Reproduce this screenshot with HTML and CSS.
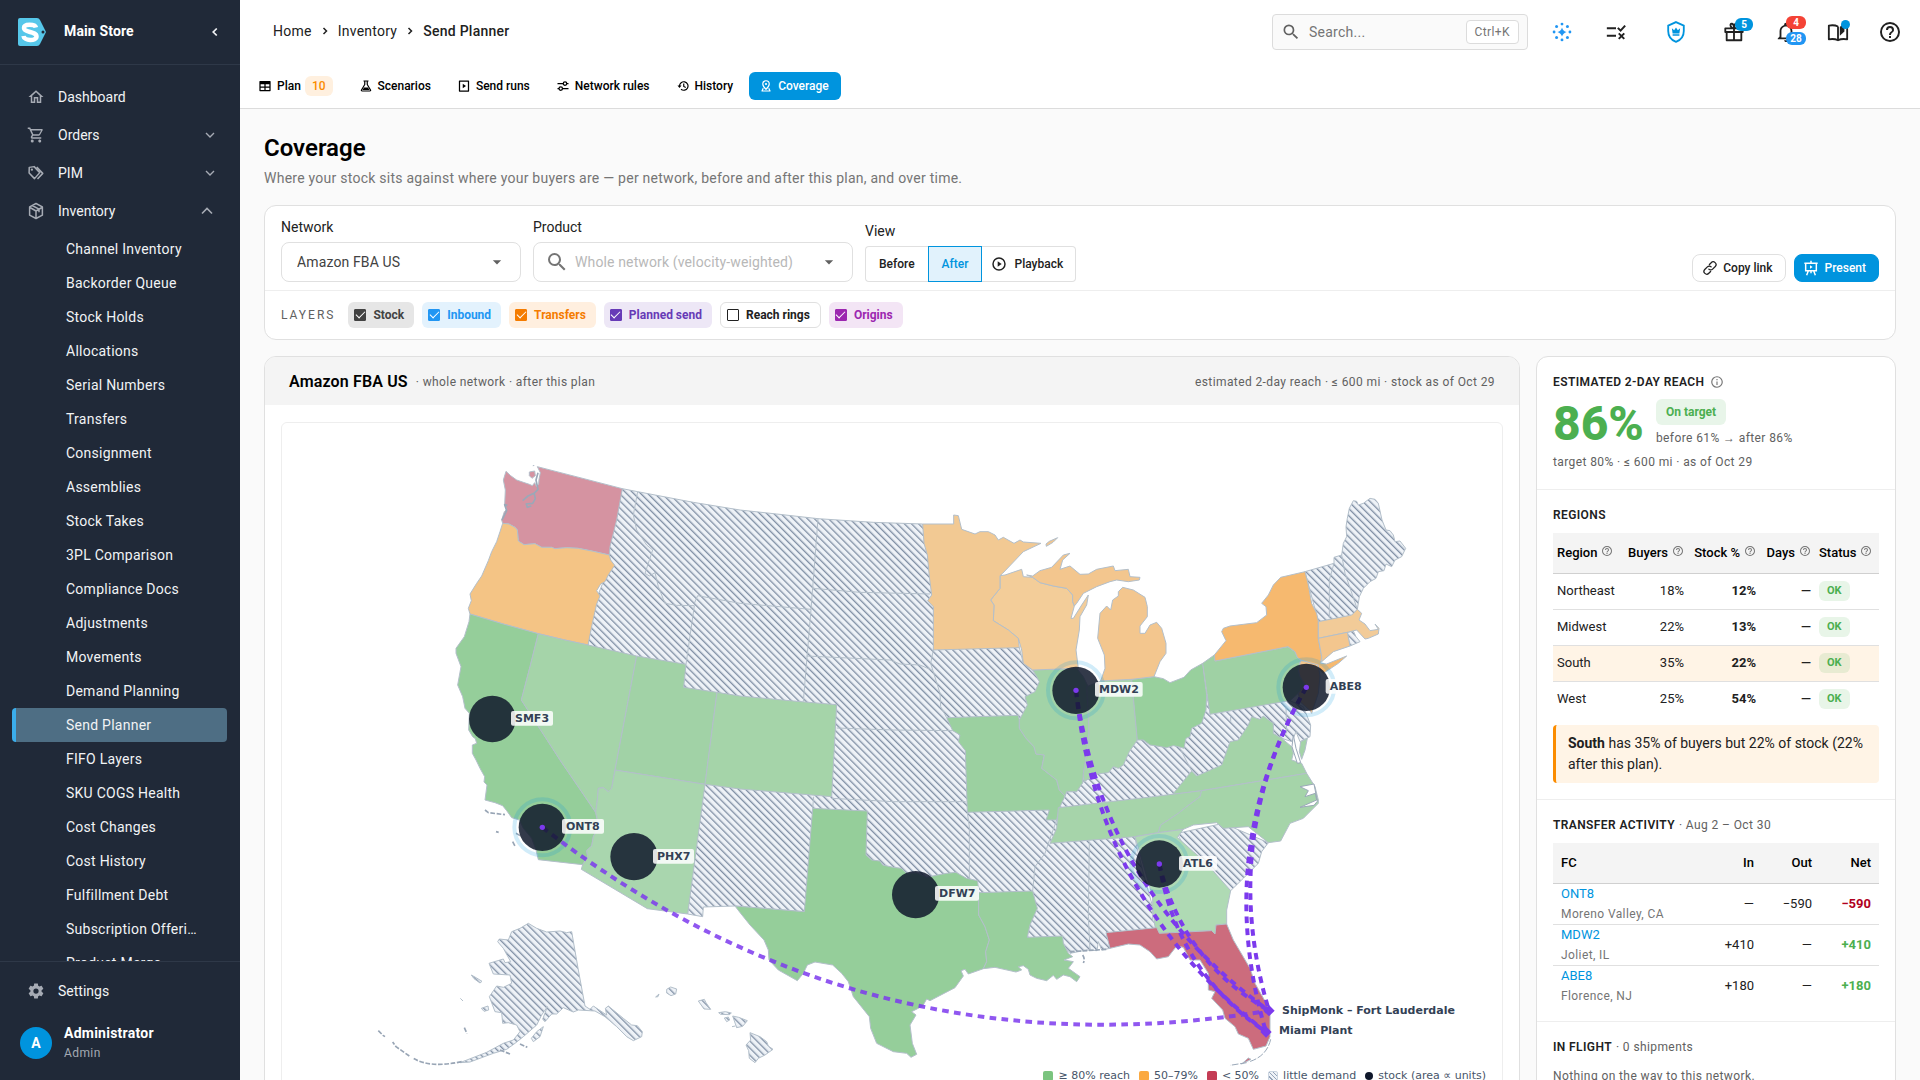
FILE: index.html
```html
<!DOCTYPE html>
<html lang="en">
<head>
<meta charset="utf-8">
<meta name="viewport" content="width=device-width, initial-scale=1">
<title>Coverage · Send Planner</title>
<link rel="stylesheet" href="styles.css">
</head>
<body>
<svg class="defs" aria-hidden="true">
  <symbol id="i-magnify" viewBox="0 0 24 24"><path fill="currentColor" d="M9.5,3A6.5,6.5 0 0,1 16,9.5C16,11.11 15.41,12.59 14.44,13.73L14.71,14H15.5L20.5,19L19,20.5L14,15.5V14.71L13.73,14.44C12.59,15.41 11.11,16 9.5,16A6.5,6.5 0 0,1 3,9.5A6.5,6.5 0 0,1 9.5,3M9.5,5C7,5 5,7 5,9.5C5,12 7,14 9.5,14C12,14 14,12 14,9.5C14,7 12,5 9.5,5Z"/></symbol>
  <symbol id="i-home" viewBox="0 0 24 24"><path fill="currentColor" d="M12 5.69L17 10.19V18H15V12H9V18H7V10.19L12 5.69M12 3L2 12H5V20H11V14H13V20H19V12H22L12 3Z"/></symbol>
  <symbol id="i-cart" viewBox="0 0 24 24"><path fill="currentColor" d="M17,18A2,2 0 0,1 19,20A2,2 0 0,1 17,22C15.89,22 15,21.1 15,20C15,18.89 15.89,18 17,18M1,2H4.27L5.21,4H20A1,1 0 0,1 21,5C21,5.17 20.95,5.34 20.88,5.5L17.3,11.97C16.96,12.58 16.3,13 15.55,13H8.1L7.2,14.63L7.17,14.75A0.25,0.25 0 0,0 7.42,15H19V17H7C5.89,17 5,16.1 5,15C5,14.65 5.09,14.32 5.24,14.04L6.6,11.59L3,4H1V2M7,18A2,2 0 0,1 9,20A2,2 0 0,1 7,22C5.89,22 5,21.1 5,20C5,18.89 5.89,18 7,18M16,11L18.78,6H6.14L8.5,11H16Z"/></symbol>
  <symbol id="i-tags" viewBox="0 0 24 24"><path fill="none" stroke="currentColor" stroke-width="2" stroke-linejoin="round" d="M3 4.500 9.500 3.500 17 11.500 10 19.500 2.800 12zM13 4l8 8.500-7 7.500"/><circle cx="6.500" cy="7.500" r="1.500" fill="currentColor"/></symbol>
  <symbol id="i-box" viewBox="0 0 24 24"><path fill="none" stroke="currentColor" stroke-width="2" stroke-linejoin="round" d="M12 2 20.500 6.500v11L12 22 3.500 17.500v-11zM3.500 7 12 12l8.500-5M12 12v9.500M7.500 5 16 9.500v4"/></symbol>
  <symbol id="i-cog" viewBox="0 0 24 24"><path fill="currentColor" d="M12,15.5A3.5,3.5 0 0,1 8.500,12A3.5,3.5 0 0,1 12,8.500A3.5,3.5 0 0,1 15.500,12A3.5,3.5 0 0,1 12,15.500M19.430,12.970C19.470,12.650 19.500,12.330 19.500,12C19.500,11.670 19.470,11.340 19.430,11L21.540,9.370C21.730,9.220 21.780,8.950 21.660,8.730L19.660,5.270C19.540,5.050 19.270,4.960 19.050,5.050L16.560,6.050C16.040,5.660 15.500,5.320 14.870,5.070L14.500,2.420C14.460,2.180 14.250,2 14,2H10C9.750,2 9.540,2.180 9.500,2.420L9.130,5.070C8.500,5.320 7.960,5.660 7.440,6.050L4.950,5.050C4.730,4.960 4.460,5.050 4.340,5.270L2.340,8.730C2.210,8.950 2.270,9.220 2.460,9.370L4.570,11C4.530,11.340 4.500,11.670 4.500,12C4.500,12.330 4.530,12.650 4.570,12.970L2.460,14.630C2.270,14.780 2.210,15.050 2.340,15.270L4.340,18.730C4.460,18.950 4.730,19.030 4.950,18.950L7.440,17.940C7.960,18.340 8.500,18.680 9.130,18.930L9.500,21.580C9.540,21.820 9.750,22 10,22H14C14.250,22 14.460,21.820 14.500,21.580L14.870,18.930C15.500,18.670 16.040,18.340 16.560,17.940L19.050,18.950C19.270,19.030 19.540,18.950 19.660,18.730L21.660,15.270C21.780,15.050 21.730,14.780 21.540,14.630L19.430,12.970Z"/></symbol>
  <symbol id="i-down" viewBox="0 0 24 24"><path fill="none" stroke="currentColor" stroke-width="2" d="M6 9l6 6 6-6"/></symbol>
  <symbol id="i-up" viewBox="0 0 24 24"><path fill="none" stroke="currentColor" stroke-width="2" d="M6 15l6-6 6 6"/></symbol>
  <symbol id="i-left" viewBox="0 0 24 24"><path fill="none" stroke="currentColor" stroke-width="3" d="M15 6l-6 6 6 6"/></symbol>
  <symbol id="i-right" viewBox="0 0 24 24"><path fill="none" stroke="currentColor" stroke-width="3" d="M9 6l6 6-6 6"/></symbol>
  <symbol id="i-caret" viewBox="0 0 24 24"><path fill="currentColor" d="M7 10l5 5 5-5z"/></symbol>
  <symbol id="i-help" viewBox="0 0 24 24"><path fill="currentColor" d="M11,18H13V16H11V18M12,2A10,10 0 0,0 2,12A10,10 0 0,0 12,22A10,10 0 0,0 22,12A10,10 0 0,0 12,2M12,20C7.59,20 4,16.41 4,12C4,7.59 7.59,4 12,4C16.41,4 20,7.59 20,12C20,16.41 16.41,20 12,20M12,6A4,4 0 0,0 8,10H10A2,2 0 0,1 12,8A2,2 0 0,1 14,10C14,12 11,11.75 11,15H13C13,12.75 16,12.5 16,10A4,4 0 0,0 12,6Z"/></symbol>
  <symbol id="i-info" viewBox="0 0 24 24"><path fill="none" stroke="currentColor" stroke-width="2" d="M12 3a9 9 0 1 0 0 18 9 9 0 0 0 0-18zM12 11v6M12 7v2"/></symbol>
  <symbol id="i-table" viewBox="0 0 24 24"><path fill="none" stroke="currentColor" stroke-width="2.500" stroke-linejoin="round" d="M2 3h20v18H2zM2 14h20M12 8v13"/><path fill="currentColor" d="M2 3h20v5.500H2z"/></symbol>
  <symbol id="i-flask" viewBox="0 0 24 24"><path fill="none" stroke="currentColor" stroke-width="2.400" stroke-linejoin="round" d="M7 2h10M9.500 2v7L3 20q-1 2 1.500 2h15q2.500 0 1.500-2L14.500 9V2"/><path fill="currentColor" d="M8 15h8l3 5H5z"/></symbol>
  <symbol id="i-run" viewBox="0 0 24 24"><path fill="none" stroke="currentColor" stroke-width="2.500" stroke-linejoin="round" d="M3 2h18v20H3z"/><path fill="currentColor" d="M9.500 7.500l6.500 4.500-6.500 4.500z"/></symbol>
  <symbol id="i-rules" viewBox="0 0 24 24"><path fill="none" stroke="currentColor" stroke-width="2.500" d="M1 7h12M19 7h4M16 3.500a3.500 3.500 0 1 1 0 7 3.500 3.500 0 0 1 0-7M23 17H11M1 17h3M7.500 13.500a3.500 3.500 0 1 1 0 7 3.500 3.500 0 0 1 0-7"/></symbol>
  <symbol id="i-history" viewBox="0 0 24 24"><path fill="none" stroke="currentColor" stroke-width="2.400" d="M5 12a8.500 8.500 0 1 1 3 6.500M13.500 7v6l4 2"/><path fill="currentColor" d="M1 11h8l-4 5z"/></symbol>
  <symbol id="i-pin" viewBox="0 0 24 24"><path fill="none" stroke="currentColor" stroke-width="2.400" stroke-linejoin="round" d="M12 1.500a6.500 6.500 0 0 1 6.500 6.500c0 4.500-6.500 10.500-6.500 10.500S5.500 12.500 5.500 8A6.500 6.500 0 0 1 12 1.500zM6.500 16.500 4 22h16l-2.500-5.500"/><circle cx="12" cy="8" r="2.200" fill="currentColor"/></symbol>
  <symbol id="i-play" viewBox="0 0 24 24"><path fill="none" stroke="currentColor" stroke-width="2.200" d="M12 3a9 9 0 1 0 0 18 9 9 0 0 0 0-18z"/><path fill="currentColor" d="M10 8l6 4-6 4z"/></symbol>
  <symbol id="i-link" viewBox="0 0 24 24"><path fill="none" stroke="currentColor" stroke-width="2.200" stroke-linecap="round" d="M11 6l3-3a4.500 4.500 0 0 1 7 6.500l-4.500 4.500a4.500 4.500 0 0 1-6.500 0M13 18l-3 3a4.500 4.500 0 0 1-7-6.500L7.500 10a4.500 4.500 0 0 1 6.500 0"/></symbol>
  <symbol id="i-present" viewBox="0 0 24 24"><path fill="none" stroke="currentColor" stroke-width="2.200" d="M2 5h20M4 5v11h16V5M12 1v4M8 16l-2.500 7M16 16l2.500 7M12 16v4"/><path fill="currentColor" d="M10.500 8l4 2.500-4 2.500z"/></symbol>
  <symbol id="i-spark" viewBox="0 0 24 24"><path fill="currentColor" d="M12 6.500q1.200 4.300 5.500 5.500-4.300 1.200-5.500 5.500-1.200-4.300-5.500-5.500 4.300-1.200 5.500-5.500z"/><g fill="currentColor"><circle cx="12" cy="2.500" r="1.700"/><circle cx="12" cy="21.500" r="1.700"/><circle cx="2.500" cy="12" r="1.700"/><circle cx="21.500" cy="12" r="1.700"/><circle cx="5.500" cy="5.500" r="1.800"/><circle cx="18.500" cy="5.500" r="1.800"/><circle cx="5.500" cy="18.500" r="1.800"/><circle cx="18.500" cy="18.500" r="1.800"/></g></symbol>
  <symbol id="i-checks" viewBox="0 0 24 24"><path fill="none" stroke="currentColor" stroke-width="2.200" d="M2 8h10M2 16h10M14 7.500l3 3L22 5M15 13.500l6 6M21 13.500l-6 6"/></symbol>
  <symbol id="i-shield" viewBox="0 0 24 24"><path fill="none" stroke="currentColor" stroke-width="2" d="M12 1.200l8.500 3.800v6c0 5.500-3.500 10-8.500 11.800-5-1.800-8.500-6.300-8.500-11.800V5z"/><path fill="currentColor" d="M7.500 8l2.500 2 2-3 2 3 2.500-2-.8 5.500H8.300zM8.300 14.500h7.400v1.500H8.300z"/></symbol>
  <symbol id="i-gift" viewBox="0 0 24 24"><path fill="none" stroke="currentColor" stroke-width="2" stroke-linejoin="round" d="M2.500 8h19v4h-19zM4 12v9h16v-9M12 8v13M12 8C8 8 7 3 9.500 3S12 8 12 8s0-5 2.500-5S16 8 12 8"/></symbol>
  <symbol id="i-bell" viewBox="0 0 24 24"><path fill="currentColor" d="M10 21H14C14 22.1 13.1 23 12 23S10 22.1 10 21M21 19V20H3V19L5 17V11C5 7.900 7.030 5.170 10 4.290V4C10 2.900 10.900 2 12 2S14 2.900 14 4V4.290C16.970 5.170 19 7.900 19 11V17L21 19M17 11C17 8.240 14.760 6 12 6S7 8.240 7 11V18H17V11Z"/></symbol>
  <symbol id="i-book" viewBox="0 0 24 24"><path fill="none" stroke="currentColor" stroke-width="2" stroke-linejoin="round" d="M12 6q-4-2-10-1v15q6-1 10 1 4-2 10-1V6M12 6v15"/><path fill="currentColor" d="M14 6.500l5-4.500v9.500l-5 4.500z"/></symbol>
  <symbol id="i-logo" viewBox="0 0 28 28"><path fill="#56c7ea" d="M2 0h17q2 0 3 2l6 12-6 12q-1 2-3 2H2q-2 0-2-2V2q0-2 2-2z"/><circle cx="25" cy="14" r="1.500" fill="#202938"/><path fill="none" stroke="#fff" stroke-width="4.500" d="M18 9.500C17 6 6 5.500 6 10c0 5 12.500 3 12.500 8.500 0 5-12.500 4.500-13-.5"/></symbol>
</svg>

<div class="app">
<aside class="sidebar">
  <div class="brand">
    <svg class="logo"><use href="#i-logo"/></svg>
    <strong>Main Store</strong>
    <button class="collapse" aria-label="Collapse menu"><svg class="ic14"><use href="#i-left"/></svg></button>
  </div>
  <nav class="menu" aria-label="Main">
    <a class="item" href="#"><svg class="ic18"><use href="#i-home"/></svg><span>Dashboard</span></a>
    <a class="item" href="#"><svg class="ic18"><use href="#i-cart"/></svg><span>Orders</span><svg class="ic16 arrow"><use href="#i-down"/></svg></a>
    <a class="item" href="#"><svg class="ic18"><use href="#i-tags"/></svg><span>PIM</span><svg class="ic16 arrow"><use href="#i-down"/></svg></a>
    <a class="item open" href="#"><svg class="ic18"><use href="#i-box"/></svg><span>Inventory</span><svg class="ic20 arrow"><use href="#i-up"/></svg></a>
    <div class="submenu">
      <a href="#">Channel Inventory</a><a href="#">Backorder Queue</a><a href="#">Stock Holds</a><a href="#">Allocations</a><a href="#">Serial Numbers</a><a href="#">Transfers</a><a href="#">Consignment</a><a href="#">Assemblies</a><a href="#">Stock Takes</a><a href="#">3PL Comparison</a><a href="#">Compliance Docs</a><a href="#">Adjustments</a><a href="#">Movements</a><a href="#">Demand Planning</a><a href="#" class="active" aria-current="page">Send Planner</a><a href="#">FIFO Layers</a><a href="#">SKU COGS Health</a><a href="#">Cost Changes</a><a href="#">Cost History</a><a href="#">Fulfillment Debt</a><a href="#">Subscription Offerings</a><a href="#">Product Merge</a>
    </div>
  </nav>
  <div class="side-foot">
    <a class="item" href="#"><svg class="ic18"><use href="#i-cog"/></svg><span>Settings</span></a>
    <div class="user"><span class="avatar">A</span><div><strong>Administrator</strong><small>Admin</small></div></div>
  </div>
</aside>

<div class="page">
  <header class="topbar">
    <nav class="crumbs" aria-label="Breadcrumb"><a href="#">Home</a><svg class="ic12"><use href="#i-right"/></svg><a href="#">Inventory</a><svg class="ic12"><use href="#i-right"/></svg><b>Send Planner</b></nav>
    <label class="search"><svg class="ic20"><use href="#i-magnify"/></svg><input type="text" placeholder="Search..." aria-label="Search"><kbd>Ctrl+K</kbd></label>
    <div class="tools">
      <button class="blue" aria-label="Assistant"><svg class="ic20"><use href="#i-spark"/></svg></button>
      <button class="tasks" aria-label="Tasks"><svg class="ic22"><use href="#i-checks"/></svg></button>
      <button class="azure" aria-label="Security"><svg class="ic22"><use href="#i-shield"/></svg></button>
      <button aria-label="What's new"><svg class="ic22"><use href="#i-gift"/></svg><span class="badge b-gift">5</span></button>
      <button aria-label="Notifications"><svg class="ic22"><use href="#i-bell"/></svg><span class="badge b-red">4</span><span class="badge b-blue">28</span></button>
      <button aria-label="Guide"><svg class="ic22"><use href="#i-book"/></svg><span class="dot"></span></button>
      <button aria-label="Help"><svg class="ic24"><use href="#i-help"/></svg></button>
    </div>
  </header>
  <nav class="tabs" aria-label="Send planner">
    <a href="#"><svg class="ic12"><use href="#i-table"/></svg>Plan<span class="count">10</span></a>
    <a href="#"><svg class="ic12"><use href="#i-flask"/></svg>Scenarios</a>
    <a href="#"><svg class="ic12"><use href="#i-run"/></svg>Send runs</a>
    <a href="#"><svg class="ic12"><use href="#i-rules"/></svg>Network rules</a>
    <a href="#"><svg class="ic12"><use href="#i-history"/></svg>History</a>
    <a href="#" class="active"><svg class="ic12"><use href="#i-pin"/></svg>Coverage</a>
  </nav>

  <main class="content">
    <h1>Coverage</h1>
    <p class="lead">Where your stock sits against where your buyers are — per network, before and after this plan, and over time.</p>

    <section class="card filters">
      <div class="filter-row">
        <div class="field network">
          <label for="network">Network</label>
          <div class="control"><select id="network"><option>Amazon FBA US</option></select><svg class="ic20 caret"><use href="#i-caret"/></svg></div>
        </div>
        <div class="field product">
          <label for="product">Product</label>
          <div class="control"><svg class="ic24 lens"><use href="#i-magnify"/></svg><input id="product" type="text" placeholder="Whole network (velocity-weighted)"><svg class="ic20 caret"><use href="#i-caret"/></svg></div>
        </div>
        <div class="field">
          <span class="view-label" id="view">View</span>
          <div class="segments" role="group" aria-labelledby="view">
            <button>Before</button><button class="on">After</button><button><svg class="ic16"><use href="#i-play"/></svg>Playback</button>
          </div>
        </div>
        <div class="actions">
          <button class="btn"><svg class="ic14"><use href="#i-link"/></svg>Copy link</button>
          <button class="btn primary"><svg class="ic16"><use href="#i-present"/></svg>Present</button>
        </div>
      </div>
      <div class="layers">
        <span class="layers-title">LAYERS</span>
        <label class="chip stock"><input type="checkbox" checked>Stock</label>
        <label class="chip inbound"><input type="checkbox" checked>Inbound</label>
        <label class="chip transfers"><input type="checkbox" checked>Transfers</label>
        <label class="chip planned"><input type="checkbox" checked>Planned send</label>
        <label class="chip rings"><input type="checkbox">Reach rings</label>
        <label class="chip origins"><input type="checkbox" checked>Origins</label>
      </div>
    </section>

    <div class="columns">
      <section class="card map-card">
        <header class="map-head"><h2>Amazon FBA US</h2><span>· whole network · after this plan</span><span class="map-note">estimated 2-day reach · ≤ 600 mi · stock as of Oct 29</span></header>
        <div class="map-body"><div class="map-box">
          <svg class="map" viewBox="-234 -51 3660 1932" role="img" aria-label="Coverage map of the United States">
            <defs><pattern id="hatch" width="15" height="15" patternUnits="userSpaceOnUse" patternTransform="rotate(-45)"><rect width="15" height="15" fill="#eef2f7"/><rect width="4" height="15" fill="#8190a5"/></pattern></defs>
            <g class="state" fill="url(#hatch)">
              <path d="M787 146L833 155 1000 187 1140 210 1250 222 1374 236 1540 247 1688 252 1800 400 1800 600 1978 623 1990 670 2018 690 2100 720 2050 800 1980 900 2000 1000 2100 1130 2200 1180 2325 1190 2330 1220 2350 1300 2378 1400 2378 1440 2390 1463 2300 1490 2250 1500 2250 1525 2225 1530 2215 1505 2211 1532 2180 1530 2130 1540 2100 1510 1980 1500 1900 1400 1700 1380 1400 1350 1333 1415 1125 1398 1030 1401 1028 1430 983 1422 1000 1100 1000 900 900 700 684 615 700 500 740 400 750 300z"/>
              <path d="M2090 1105L2115 1068 2120 1055 2150 1055 2168 1028 2160 990 2300 900 2460 880 2540 765 2550 810 2790 782 2830 800 2852 855 2850 890 2820 905 2808 875 2796 905 2765 895 2740 930 2600 1000 2438 1063 2380 1072z"/>
              <path d="M2452 1180L2590 1150 2725 1208 2705 1235 2695 1270 2650 1315 2612 1352 2520 1320z"/>
              <path d="M2835 395L2922 370 2922 352 2945 345 2950 310 2960 290 2958 260 2962 235 2968 205 2980 182 2990 184 2995 195 3010 190 3030 175 3045 178 3055 190 3066 240 3078 270 3090 272 3100 285 3105 305 3120 303 3137 325 3125 350 3105 360 3095 380 3078 372 3072 392 3055 395 3048 415 3030 425 3010 445 2998 470 2992 508 2975 530 2875 545z"/>
              <path d="M2962 577L2980 573 2988 590 3000 605 2970 618z"/>
              <path d="M505 1450L530 1465 560 1476 600 1473 620 1478 635 1475 655 1590 675 1698 690 1708 700 1698 740 1725 736 1705 745 1698 790 1735 815 1755 832 1757 847 1775 845 1790 820 1802 800 1790 770 1760 735 1730 705 1713 655 1710 640 1716 610 1703 590 1722 575 1722 555 1745 548 1738 562 1700 545 1725 530 1755 490 1790 465 1810 440 1828 400 1840 330 1866 300 1868 380 1837 430 1810 460 1800 480 1775 470 1755 445 1748 428 1750 425 1718 405 1715 388 1670 410 1638 430 1642 455 1630 450 1605 400 1602 387 1570 430 1557 435 1568 452 1565 430 1525 413 1505 418 1497 445 1500 455 1475 480 1465z"/>
              <path d="M550 1760L540 1790 520 1805 514 1795 530 1775zM364 1705L384 1698 386 1710 372 1714zM334 1605L350 1614 366 1624 360 1629 342 1616zM301 1675l8 8"/>
              <path d="M920 1648l12-7 18 6-3 15-14 5-13-8zM887 1671l10-9-3 8zM1015 1683l18-5 5 10 14 20-20-1zM1076 1718l20-3 18 4-6 5-26-1zM1093 1734l12-3 4 9-9 5zM1118 1728l18 4 26 10-14 17-18 4zM1116 1760l10-2"/>
              <path d="M1170 1778L1200 1790 1220 1805 1225 1818 1239 1828 1215 1845 1195 1855 1185 1868 1168 1855 1166 1832 1158 1815 1172 1800z"/>
            </g>
            <g class="state" fill="none">
              <path d="M833 155L820 225 830 270 860 315 878 330 855 400 868 408 885 398 895 440 915 490 950 496 1003 497 978 673M1003 490L1013 467 1140 490 1353 508M1374 236L1353 508 1330 784M1358 445L1500 457 1710 462M1340 648L1590 660 1620 672 1680 675 1715 690M1720 630L1712 670 1740 760 1742 800 1760 833M1430 864L1600 870 1778 872M1415 1075L1600 1085 1817 1085M1361 1070L1358 1105M1822 1117L1828 1160 1828 1315M2090 1140L2065 1210 2055 1240 2025 1280 2018 1353M2188 1205L2185 1430 2190 1530M2460 925L2478 960 2495 993M2922 370L2908 420 2908 535M2945 345L2955 400 2992 508M2612 845L2612 830M2778 800L2780 880"/>
            </g>
            <g class="state aleut" fill="none"><path d="M305 1865Q210 1885 160 1855M148 1848L108 1820 98 1806M55 1772l14 14 6 4M313 1763l8 18M375 1110l10 8 50 6M408 1175l8 2M458 1205l8 15M468 1180l14 8M2130 1535L2240 1528M2168 1545q8 12 2 24M480 1812l22 10M420 1830l30 12"/></g>
            <g class="state">
              <path fill="#d593a1" d="M438 94L452 107 470 120 490 127 508 133 517 137 524 128 530 140 536 132 537 118 541 98 532 80 660 113 787 146 770 240 750 320 748 345 700 334 655 325 620 323 585 326 575 322 545 322 525 311 492 314 475 303 472 270 465 262 447 252 428 250 425 240 433 215 440 208 434 195 436 150 430 120z"/>
              <path fill="#d593a1" d="M508 96l16-3 2 14-10 8-8-8z"/>
              <path fill="#f4c485" d="M428 250L447 252 465 262 472 270 475 303 492 314 525 311 545 322 575 322 585 326 620 323 655 325 700 334 748 345 752 360 764 376 745 405 735 425 722 432 710 452 720 468 710 492 697 550 684 615 610 599 535 581 430 552 330 522 325 505 334 482 330 462 350 430 365 408 385 362 395 335 410 305 420 275z"/>
              <path fill="#95ce9a" d="M330 522L430 552 535 581 510 680 484 780 600 960 707 1117 716 1158 700 1190 695 1218 680 1232 683 1250 668 1274 535 1259 528 1230 515 1195 490 1165 478 1140 455 1133 440 1112 428 1097 405 1088 375 1080 381 1035 372 1026 374 1010 360 985 348 960 337 940 337 915 350 910 346 896 338 890 326 870 328 820 315 805 308 770 293 735 303 680 288 640 288 625 313 590 327 545z"/>
              <path fill="#a5d4a9" d="M535 581L610 599 684 615 830 648 765 990 755 1045 745 1055 730 1043 715 1045 712 1080 707 1117 600 960 484 780 510 680z"/>
              <path fill="#a1d2a6" d="M830 648L978 673 971 742 1071 757 1035 1033 765 990z"/>
              <path fill="#a5d4a9" d="M1071 757L1140 768 1300 783 1430 794 1415 1070 1140 1047 1035 1033z"/>
              <path fill="#a9d6ae" d="M765 990L1035 1033 983 1422 862 1406 664 1288 668 1274 683 1250 680 1232 695 1218 700 1190 716 1158 707 1117 712 1080 715 1045 730 1043 745 1055 755 1045z"/>
              <path fill="#95ce9a" d="M1358 1105L1522 1113 1518 1245 1535 1260 1560 1263 1568 1275 1600 1282 1625 1285 1640 1300 1670 1298 1700 1312 1732 1305 1760 1300 1788 1297 1820 1315 1853 1322 1856 1358 1856 1425 1875 1460 1888 1500 1877 1535 1880 1565 1870 1586 1825 1602 1815 1588 1803 1592 1810 1608 1785 1643 1710 1682 1700 1677 1688 1698 1655 1715 1668 1725 1650 1755 1657 1810 1670 1843 1653 1852 1640 1840 1600 1835 1550 1810 1532 1765 1528 1730 1500 1695 1480 1670 1465 1625 1445 1600 1418 1575 1365 1566 1342 1575 1330 1600 1312 1622 1255 1590 1227 1560 1225 1530 1212 1500 1170 1455 1138 1415 1125 1398 1333 1415z"/>
              <path fill="#98cf9d" d="M1856 1358L2018 1353 2025 1380 2032 1405 2010 1455 2002 1492 2108 1488 2110 1510 2125 1540 2138 1550 2112 1560 2140 1565 2125 1585 2160 1610 2150 1625 2130 1610 2110 1605 2090 1618 2080 1606 2060 1622 2030 1615 2010 1605 2005 1588 1990 1577 1975 1580 1985 1590 1968 1596 1905 1582 1870 1586 1880 1565 1877 1535 1888 1500 1875 1460 1856 1425z"/>
              <path fill="#9bd0a0" d="M1760 833L1975 826 1978 840 1978 865 1998 895 2022 920 2028 942 2053 945 2045 985 2090 1020 2098 1050 2115 1068 2098 1105 2090 1140 2058 1140 2068 1110 1822 1117 1816 932 1795 905 1800 885 1778 872z"/>
              <path fill="#a2d3a7" d="M2018 690L2150 685 2170 710 2187 745 2187 880 2175 975 2170 1000 2168 1028 2150 1055 2120 1055 2115 1068 2098 1050 2090 1020 2045 985 2053 945 2028 942 2022 920 1998 895 1978 865 1978 840 2002 795 1995 770 2025 755 2038 725 2030 710z"/>
              <path fill="#a8d5ad" d="M2180 740L2222 723 2315 718 2332 900 2308 935 2290 975 2275 985 2260 980 2245 998 2210 1002 2172 1025 2170 1000 2175 975 2187 880z"/>
              <path fill="#98d09d" d="M2315 718L2382 710 2410 716 2430 728 2472 712 2492 690 2528 670 2540 765 2538 810 2525 850 2495 865 2490 890 2478 895 2472 925 2455 920 2440 917 2420 923 2390 918 2370 915 2350 900 2332 900z"/>
              <path fill="#f3cd99" d="M1920 407L1935 405 1985 388 1990 410 2018 412 2040 428 2080 438 2120 445 2138 465 2138 485 2143 498 2133 535 2140 535 2165 495 2185 465 2180 495 2160 530 2158 570 2148 630 2155 685 2018 690 1990 670 1985 630 1975 595 1945 570 1900 542 1902 495 1892 480 1920 445z"/>
              <path fill="#f2c993" d="M1688 252L1781 252 1781 225 1795 227 1805 268 1845 282 1860 275 1885 275 1905 285 1915 300 1930 292 1962 310 1980 300 1990 306 2043 310 1990 335 1928 400 1920 407 1920 445 1892 480 1902 495 1900 542 1945 570 1975 595 1978 623 1720 630 1720 500 1703 482 1715 465 1708 410 1702 345 1692 310z"/>
              <path fill="#f3c68e" d="M2000 405L2018 408 2040 392 2075 382 2110 345 2130 340 2108 360 2100 388 2130 378 2160 403 2185 402 2210 388 2260 378 2265 392 2305 388 2310 410 2340 412 2338 420 2305 425 2270 420 2250 425 2210 440 2180 455 2170 460 2150 490 2143 498 2138 485 2138 465 2120 445 2080 438 2040 428 2018 412zM2058 312l10-8 25-11-14 14-20 12z"/>
              <path fill="#f3c68e" d="M2275 455L2288 442 2320 450 2355 472 2362 500 2362 530 2340 558 2340 580 2355 580 2370 555 2390 547 2405 565 2418 610 2418 640 2400 665 2382 710 2315 718 2222 723 2235 685 2233 645 2213 595 2220 520 2240 498 2252 510 2258 480 2275 468z"/>
              <path fill="#9fd1a4" d="M2528 670L2563 645 2565 663 2784 620 2805 635 2812 652 2822 660 2815 690 2820 710 2835 735 2815 760 2790 782 2550 823z"/>
              <path fill="#f6b96f" d="M2565 663L2563 645 2598 602 2585 575 2590 565 2610 558 2650 553 2690 548 2720 525 2718 500 2705 490 2725 465 2740 435 2762 412 2835 395 2845 435 2855 490 2870 520 2875 545 2875 595 2885 650 2882 670 2900 672 2960 648 2935 670 2890 700 2870 680 2822 660 2812 652 2805 635 2784 620z"/>
              <path fill="#f3c68e" d="M2822 660L2875 675 2880 710 2875 760 2855 820 2848 810 2820 785 2815 760 2835 735 2820 710 2815 690z"/>
              <path fill="#f2cb98" d="M2875 545L2975 525 2992 508 3005 520 2997 540 3015 552 3030 572 3055 568 3045 552 3057 565 3055 582 3025 595 3015 597 2990 570 2962 577 2875 595z"/>
              <path fill="#f3c68e" d="M2875 595L2962 577 2970 618 2920 635 2885 665 2885 650z"/>
              <path fill="#a4d3a8" d="M2438 1063L2495 993 2510 1008 2585 975 2610 905 2635 900 2665 855 2675 830 2700 838 2710 828 2740 850 2740 880 2765 895 2795 920 2800 940 2795 960 2825 970 2840 1000 2525 1052zM2822 905L2842 895 2835 930 2825 958 2818 935z"/>
              <path fill="#a6d4aa" d="M2095 1103L2380 1070 2525 1052 2520 1070 2480 1100 2455 1120 2425 1140 2402 1155 2395 1178 2325 1190 2070 1210 2090 1165z"/>
              <path fill="#a5d4a9" d="M2525 1052L2840 1000 2865 1040 2875 1080 2875 1090 2830 1135 2790 1150 2762 1203 2725 1208 2665 1160 2590 1165 2570 1148 2500 1155 2470 1168 2395 1178 2402 1155 2425 1140 2455 1120 2480 1100 2520 1070z"/>
              <path fill="#afdab4" d="M2325 1190L2395 1178 2470 1168 2452 1192 2500 1235 2540 1270 2570 1305 2612 1352 2600 1410 2600 1452 2568 1455 2565 1482 2555 1472 2398 1480 2385 1460 2378 1400 2378 1370z"/>
              <path fill="#cc6c7d" d="M2238 1478L2390 1463 2398 1480 2555 1472 2565 1482 2568 1455 2600 1452 2620 1500 2670 1585 2685 1630 2730 1710 2730 1790 2718 1818 2680 1828 2665 1795 2635 1782 2625 1760 2595 1735 2588 1710 2555 1675 2565 1655 2545 1650 2545 1600 2520 1560 2490 1560 2470 1522 2450 1518 2425 1550 2390 1557 2370 1535 2340 1515 2305 1512 2250 1525zM2645 1872l20-18 8 4z"/>
            </g>
            <path class="inlet" d="M534 98l-6 22 6 28-12 12-18 8-16 14M522 158l4 18-8 14-20 2M498 190l4 12 12-4M520 76l1 2M426 240l14-28-6-18 8 2"/>
            <g class="sound"><path d="M2862 1032L2820 1040 2845 1052 2835 1070 2866 1060 2870 1080 2820 1102 2862 1096 2872 1084z"/><path d="M2800 885L2808 925 2822 968 2812 970 2796 920z"/></g>
            <path class="keys" d="M2732 1798Q2720 1850 2665 1866M2660 1868L2610 1876"/>
            <g class="ring"><circle cx="2148" cy="751" r="84"/><circle cx="2839" cy="742" r="84"/><circle cx="547" cy="1162" r="84"/><circle cx="2398" cy="1272" r="84"/></g>
            <g class="route">
              <path class="light" d="M547 1162Q1518 1912 2727 1712"/>
              <path d="M2148 751Q2230 1356 2727 1712"/><path d="M2148 751Q2211 1386 2718 1776"/>
              <path d="M2839 742Q2574 1203 2727 1712"/><path d="M2839 742Q2556 1233 2718 1776"/>
              <path d="M2398 1272Q2467 1563 2727 1712"/><path d="M2398 1272Q2450 1593 2718 1776"/>
            </g>
            <g class="hub"><circle cx="397" cy="837" r="70"/><circle cx="2148" cy="751" r="71"/><circle cx="2839" cy="742" r="71"/><circle cx="547" cy="1162" r="71"/><circle cx="822" cy="1250" r="71"/><circle cx="1667" cy="1364" r="71"/><circle cx="2398" cy="1272" r="71"/></g>
            <g class="mark"><circle cx="2148" cy="751" r="8"/><circle cx="2839" cy="742" r="8"/><circle cx="547" cy="1162" r="8"/><circle cx="2398" cy="1272" r="8"/><path d="M2727 1695l17 17-17 17-17-17zM2718 1759l17 17-17 17-17-17z"/></g>
            <g class="plate"><rect x="453" y="813" width="126" height="44" rx="6"/><rect x="2205" y="726" width="143" height="44" rx="6"/><rect x="2897" y="717" width="123" height="44" rx="6"/><rect x="606" y="1137" width="126" height="44" rx="6"/><rect x="879" y="1227" width="123" height="44" rx="6"/><rect x="1725" y="1338" width="132" height="44" rx="6"/><rect x="2457" y="1248" width="114" height="44" rx="6"/></g>
            <g class="label"><text x="465" y="846">SMF3</text><text x="2217" y="759">MDW2</text><text x="2909" y="750">ABE8</text><text x="618" y="1170">ONT8</text><text x="891" y="1260">PHX7</text><text x="1737" y="1371">DFW7</text><text x="2469" y="1281">ATL6</text><text x="2766" y="1722">ShipMonk – Fort Lauderdale</text><text x="2757" y="1782">Miami Plant</text></g>
          </svg>
          <ul class="legend"><li><i class="sw good"></i>≥ 80% reach</li><li><i class="sw mid"></i>50–79%</li><li><i class="sw low"></i>&lt; 50%</li><li><i class="sw little"></i>little demand</li><li><i class="sw disc"></i>stock (area ∝ units)</li></ul>
        </div></div>
      </section>

      <aside class="card side">
        <section class="block reach">
          <h3>ESTIMATED 2-DAY REACH <svg class="ic14"><use href="#i-info"/></svg></h3>
          <div class="score"><strong>86%</strong><div><span class="tag">On target</span><p>before 61% → after 86%</p></div></div>
          <p>target 80% · ≤ 600 mi · as of Oct 29</p>
        </section>
        <section class="block">
          <h3>REGIONS</h3>
          <table class="regions">
            <colgroup><col class="c-region"><col class="c-buyers"><col class="c-stock"><col class="c-days"><col></colgroup>
            <thead><tr><th>Region<svg class="ic12"><use href="#i-help"/></svg></th><th>Buyers<svg class="ic12"><use href="#i-help"/></svg></th><th>Stock %<svg class="ic12"><use href="#i-help"/></svg></th><th>Days<svg class="ic12"><use href="#i-help"/></svg></th><th>Status<svg class="ic12"><use href="#i-help"/></svg></th></tr></thead>
            <tbody>
              <tr><td>Northeast</td><td>18%</td><td><b>12%</b></td><td><b>—</b></td><td><span class="ok">OK</span></td></tr>
              <tr><td>Midwest</td><td>22%</td><td><b>13%</b></td><td><b>—</b></td><td><span class="ok">OK</span></td></tr>
              <tr class="warn"><td>South</td><td>35%</td><td><b>22%</b></td><td><b>—</b></td><td><span class="ok">OK</span></td></tr>
              <tr><td>West</td><td>25%</td><td><b>54%</b></td><td><b>—</b></td><td><span class="ok">OK</span></td></tr>
            </tbody>
          </table>
          <p class="callout"><b>South</b> has 35% of buyers but 22% of stock (22% after this plan).</p>
        </section>
        <section class="block">
          <h3>TRANSFER ACTIVITY <span>· Aug 2 – Oct 30</span></h3>
          <table class="transfers-table">
            <colgroup><col class="c-fc"><col class="c-num"><col class="c-num"><col></colgroup>
            <thead><tr><th>FC</th><th>In</th><th>Out</th><th>Net</th></tr></thead>
            <tbody>
              <tr><td><a href="#">ONT8</a><small>Moreno Valley, CA</small></td><td>—</td><td>−590</td><td class="neg">−590</td></tr>
              <tr><td><a href="#">MDW2</a><small>Joliet, IL</small></td><td>+410</td><td>—</td><td class="pos">+410</td></tr>
              <tr><td><a href="#">ABE8</a><small>Florence, NJ</small></td><td>+180</td><td>—</td><td class="pos">+180</td></tr>
            </tbody>
          </table>
        </section>
        <section class="block">
          <h3>IN FLIGHT <span>· 0 shipments</span></h3>
          <p>Nothing on the way to this network.</p>
        </section>
      </aside>
    </div>
  </main>
</div>
</div>
</body>
</html>
```
FILE: styles.css
```css
:root { --body-track: .0179em; --caption-track: .0333em; --field-track: .0094em; }
* { box-sizing: border-box; }
body { margin: 0; font: 14px/20px Roboto, sans-serif; color: #212121; background: #fafafa; }
h1, h2, h3, p, ul { margin: 0; padding: 0; }
a { color: inherit; text-decoration: none; }
button, input, select { font: inherit; color: inherit; letter-spacing: inherit; }
button { border: 0; background: none; padding: 0; }
.defs { position: absolute; width: 0; height: 0; }
.ic12 { width: 12px; height: 12px; }
.ic14 { width: 14px; height: 14px; }
.ic16 { width: 16px; height: 16px; }
.ic18 { width: 18px; height: 18px; }
.ic20 { width: 20px; height: 20px; }
.ic22 { width: 22px; height: 22px; }
.ic24 { width: 24px; height: 24px; }
svg { flex: none; }

.app { display: flex; height: 100vh; }
.sidebar { width: 240px; flex: none; display: flex; flex-direction: column; background: #202938; color: #f1f3f5; }
.brand { height: 65px; display: flex; align-items: center; padding: 0 16px 0 18px; border-bottom: 1px solid #2e3848; }
.brand strong { margin-left: 18px; flex: 1; font-weight: 700; color: #fff; padding-bottom: 2px; letter-spacing: var(--field-track); }
.logo { width: 28px; height: 28px; }
.collapse { width: 18px; height: 18px; display: grid; place-items: center; }
.menu { flex: 1; overflow: hidden; padding-top: 13px; }
.item { display: flex; align-items: center; height: 38px; padding: 0 20px 0 27px; gap: 13px; }
.item > svg:first-child { color: #a6abb4; }
.arrow { margin-left: auto; margin-right: 2px; color: #a6abb4; }
.open .arrow { margin-right: 3px; }
.submenu { padding: 2px 13px 0 12px; letter-spacing: var(--body-track); }
.submenu a { display: block; height: 34px; line-height: 34px; padding: 0 24px 0 50px; border-left: 4px solid transparent; border-radius: 4px; white-space: nowrap; overflow: hidden; text-overflow: ellipsis; }
.submenu .active { background: #4e6e84; border-left-color: #3badeb; }
.side-foot { border-top: 1px solid #2e3848; height: 119px; padding-top: 10px; }
.user { display: flex; align-items: center; gap: 12px; padding: 13px 20px; }
.avatar { width: 32px; height: 32px; border-radius: 50%; background: #0094de; color: #fff; font-weight: 700; display: grid; place-items: center; }
.user strong { display: block; font-weight: 700; color: #fff; letter-spacing: var(--body-track); }
.user small { display: block; font-size: 12px; color: #a3a9b3; letter-spacing: var(--caption-track); }

.page { flex: 1; min-width: 0; display: flex; flex-direction: column; }
.topbar { height: 64px; flex: none; background: #fff; display: flex; align-items: center; padding: 0 10px 0 33px; }
.crumbs { display: flex; align-items: center; gap: 7px; flex: 1; padding-bottom: 2px; letter-spacing: var(--body-track); }
.crumbs b { font-weight: 500; }
.search { width: 256px; height: 36px; display: flex; align-items: center; padding: 0 8px; gap: 8px; border: 1px solid #dcdcdc; border-radius: 4px; background: #fafafa; color: #616161; letter-spacing: var(--body-track); }
.search input { flex: 1; min-width: 0; border: 0; background: none; outline: 0; padding: 0; }
.search input::placeholder { color: #757575; opacity: 1; }
kbd { font: 12px/22px Roboto, sans-serif; background: #fff; border: 1px solid #dcdcdc; border-radius: 4px; padding: 0 8px; color: #757575; letter-spacing: var(--caption-track); }
.tools { display: flex; gap: 12px; margin-left: 14px; }
.tools button { position: relative; width: 40px; height: 40px; display: grid; place-items: center; }
.tools .blue { color: #2196f3; margin-right: 2px; }
.tools .tasks { margin-right: 8px; }
.tools .azure { color: #0094de; margin-right: 6px; }
.badge { position: absolute; min-width: 18px; height: 13px; line-height: 13px; border-radius: 6px; color: #fff; font-size: 10px; font-weight: 700; padding: 0 4px; text-align: center; }
.b-gift { left: 21px; top: 6px; background: #0094de; }
.b-red { left: 20px; top: 4px; min-width: 20px; background: #f44336; }
.b-blue { left: 20px; top: 20px; min-width: 20px; background: #2196f3; }
.dot { position: absolute; left: 23px; top: 8px; width: 9px; height: 9px; border-radius: 50%; background: #0094de; }
.tabs { height: 45px; flex: none; display: flex; align-items: flex-start; gap: 4px; padding: 8px 8px 0; background: #fff; border-bottom: 1px solid #dcdcdc; font-size: 12px; font-weight: 500; color: #000; }
.tabs a { height: 28px; display: flex; align-items: center; gap: 6px; padding: 0 12px 0 11px; border-radius: 6px; }
.tabs .active { background: #0094de; color: #fff; }
.count { height: 20px; margin-left: -2px; padding: 0 7px; border-radius: 6px; background: #fff0df; color: #fb8c00; line-height: 20px; }

.content { flex: 1; overflow: auto; scrollbar-width: none; padding: 23px 24px 24px; }
h1 { font-size: 24px; line-height: 32px; font-weight: 600; color: #000; }
.lead { margin-top: 4px; color: #757575; line-height: 20px; letter-spacing: var(--body-track); }
.card { background: #fff; border: 1px solid #e0e0e0; border-radius: 12px; }
.filters { margin-top: 17px; }
.filter-row { display: flex; align-items: flex-end; gap: 12px; padding: 11px 16px 8px; border-bottom: 1px solid #eee; }
.field { display: flex; flex-direction: column; }
.field label { line-height: 20px; margin-bottom: 5px; }
.view-label { line-height: 20px; margin-bottom: 5px; }
.network { width: 240px; }
.product { width: 320px; }
.control { position: relative; display: flex; align-items: center; height: 40px; border: 1px solid #e0e0e0; border-radius: 8px; background: #fff; letter-spacing: var(--field-track); }
.control select, .control input { appearance: none; border: 0; background: none; width: 100%; height: 100%; padding: 0 40px 0 15px; outline: 0; color: #424242; }
.control input { padding-left: 6px; }
.control input::placeholder { color: #b8b8b8; opacity: 1; }
.caret { position: absolute; right: 13px; color: #616161; pointer-events: none; }
.lens { margin-left: 11px; color: #757575; }
.segments { display: flex; font-size: 12px; font-weight: 500; }
.segments button { height: 36px; padding: 0 13px; border: 1px solid #e0e0e0; display: flex; align-items: center; gap: 7px; }
.segments button:first-child { border-right: 0; border-radius: 4px 0 0 4px; }
.segments button:last-child { border-left: 0; border-radius: 0 4px 4px 0; padding: 0 12px 0 9px; }
.segments .on { background: #e1f2fc; border-color: #0094de; color: #0094de; }
.actions { margin-left: auto; display: flex; gap: 8px; }
.btn { height: 28px; display: flex; align-items: center; gap: 6px; padding: 0 12px 0 10px; border: 1px solid #e0e0e0; border-radius: 8px; background: #fff; font-size: 12px; font-weight: 500; }
.primary { background: #0094de; border-color: #0094de; color: #fff; padding-left: 8px; }
.layers { display: flex; align-items: center; gap: 8px; padding: 11px 16px; font-size: 12px; }
.layers-title { letter-spacing: 2px; color: #616161; margin-right: 5px; }
.chip { display: flex; align-items: center; gap: 7px; height: 26px; padding: 0 10px 0 6px; border-radius: 6px; font-weight: 700; }
.chip input { appearance: none; margin: 0; width: 12px; height: 12px; border-radius: 1px; border: 1px solid currentColor; display: grid; place-items: center; }
.chip input:checked { background: currentColor; }
.chip input:checked::before { content: ""; width: 8px; height: 4px; border: solid #fff; border-width: 0 0 1px 1px; transform: rotate(-45deg); margin-top: -3px; }
.stock { background: #e6e6e6; color: #424242; }
.inbound { background: #e3f2fd; color: #2196f3; }
.transfers { background: #ffefdf; color: #f57c00; }
.planned { background: #ede7f6; color: #673ab7; }
.rings { background: #fff; border: 1px solid #e0e0e0; }
.origins { background: #f3e5f5; color: #9c27b0; }

.columns { display: grid; grid-template-columns: minmax(0, 1fr) 360px; gap: 16px; margin-top: 16px; align-items: start; }
.map-card { overflow: hidden; }
.map-head { display: flex; align-items: center; gap: 8px; height: 48px; padding: 2px 24px 0; background: #f4f4f4; font-size: 12px; color: #616161; letter-spacing: var(--caption-track); }
.map-head h2 { font-size: 16px; font-weight: 600; color: #000; letter-spacing: var(--field-track); }
.map-note { margin-left: auto; }
.map-body { padding: 17px 16px; }
.map-box { border: 1px solid #eee; border-radius: 6px; }
.map { display: block; width: 100%; height: auto; }
.state { stroke: #b3bfca; stroke-width: 3; stroke-linejoin: round; }
.aleut { stroke: #98a5b5; stroke-dasharray: 14 5; stroke-width: 5; }
.inlet { fill: none; stroke: #9aa8b8; stroke-width: 5; stroke-linejoin: round; }
.sound { fill: #fff; stroke: #9aa8b8; stroke-width: 3; }
.keys { fill: none; stroke: #9aa8b8; stroke-width: 3; stroke-dasharray: 20 5; }
.ring { fill: none; stroke: #0094de; stroke-opacity: .18; stroke-width: 12; }
.route { fill: none; stroke: #7c3aed; stroke-width: 12; stroke-dasharray: 20 16; }
.light { opacity: .85; }
.hub { fill: #0f172a; fill-opacity: .85; }
.mark { fill: #7c3aed; }
.plate { fill: #fff; fill-opacity: .86; }
.label { font: 700 33px "DejaVu Sans", sans-serif; fill: #334155; }
.legend { display: flex; justify-content: flex-end; gap: 9px; padding: 1px 16px 15px; list-style: none; font: 11px/16px "DejaVu Sans", sans-serif; color: #475569; }
.legend li { display: flex; align-items: center; gap: 5px; }
.sw { width: 10px; height: 10px; border-radius: 2px; }
.good { background: #7bc47f; }
.mid { background: #fba941; }
.low { background: #c43c55; }
.little { border: 1px solid #cbd5e1; background: repeating-linear-gradient(45deg, #eef2f7 0 2px, #94a3b8 2px 3px); }
.disc { width: 8px; height: 8px; border-radius: 50%; background: #0f172a; }

.block { padding: 15px 16px; border-bottom: 1px solid #eee; }
.block.reach { padding-bottom: 19px; }
h3 { display: flex; align-items: center; gap: 4px; font-size: 12px; line-height: 20px; font-weight: 600; letter-spacing: var(--caption-track); }
h3 span { font-weight: 400; color: #616161; }
h3 svg { margin-left: 2px; color: #757575; }
.block p { font-size: 12px; line-height: 16px; color: #616161; letter-spacing: var(--caption-track); }
.score { display: flex; gap: 12px; margin: 7px 0 5px; }
.score strong { font-size: 48px; line-height: 50px; font-weight: 800; color: #4caf50; }
.score p { margin-top: 5px; }
.tag { display: inline-block; height: 26px; line-height: 26px; padding: 0 10px; border-radius: 6px; background: #e8f5e9; color: #4caf50; font-size: 12px; font-weight: 700; vertical-align: top; }
table { width: 100%; border-collapse: collapse; table-layout: fixed; margin-top: 8px; font-size: 13px; line-height: 16px; }
th { height: 40px; background: #f4f4f4; font-weight: 500; color: #000; border-bottom: 1px solid #d0d0d0; text-align: right; white-space: nowrap; }
th:first-child, td:first-child { text-align: left; }
td { text-align: right; border-bottom: 1px solid #e0e0e0; }
tbody tr:last-child td { border-bottom: 0; }
.regions th, .regions td { padding: 0 4px; }
.regions th:last-child, .regions td:last-child { text-align: left; }
.regions th svg { margin-left: 4px; color: #757575; }
.regions td { height: 36px; }
.c-region { width: 71px; }
.c-buyers { width: 64px; }
.c-stock { width: 72px; }
.c-days { width: 55px; }
.warn { background: #fff4e6; }
.ok { display: inline-block; height: 20px; line-height: 20px; padding: 0 8px; border-radius: 6px; background: rgba(76, 175, 80, .13); color: #4caf50; font-size: 11px; font-weight: 700; }
.block .callout { margin: 8px 0 1px; padding: 8px 12px; border-left: 3px solid #fb8c00; border-radius: 4px; background: #fff4e6; color: #212121; font-size: 14px; line-height: 21px; letter-spacing: 0; }
.transfers-table th, .transfers-table td { padding: 0 8px; }
.transfers-table td { height: 41px; line-height: 20px; }
.transfers-table a { display: block; color: #0094de; }
.transfers-table small { display: block; font-size: 12px; color: #757575; letter-spacing: var(--caption-track); }
.c-fc { width: 151px; }
.c-num { width: 58px; }
.neg { color: #b00020; font-weight: 700; }
.pos { color: #4caf50; font-weight: 700; }
.block h3 + p { margin-top: 11px; }
```
